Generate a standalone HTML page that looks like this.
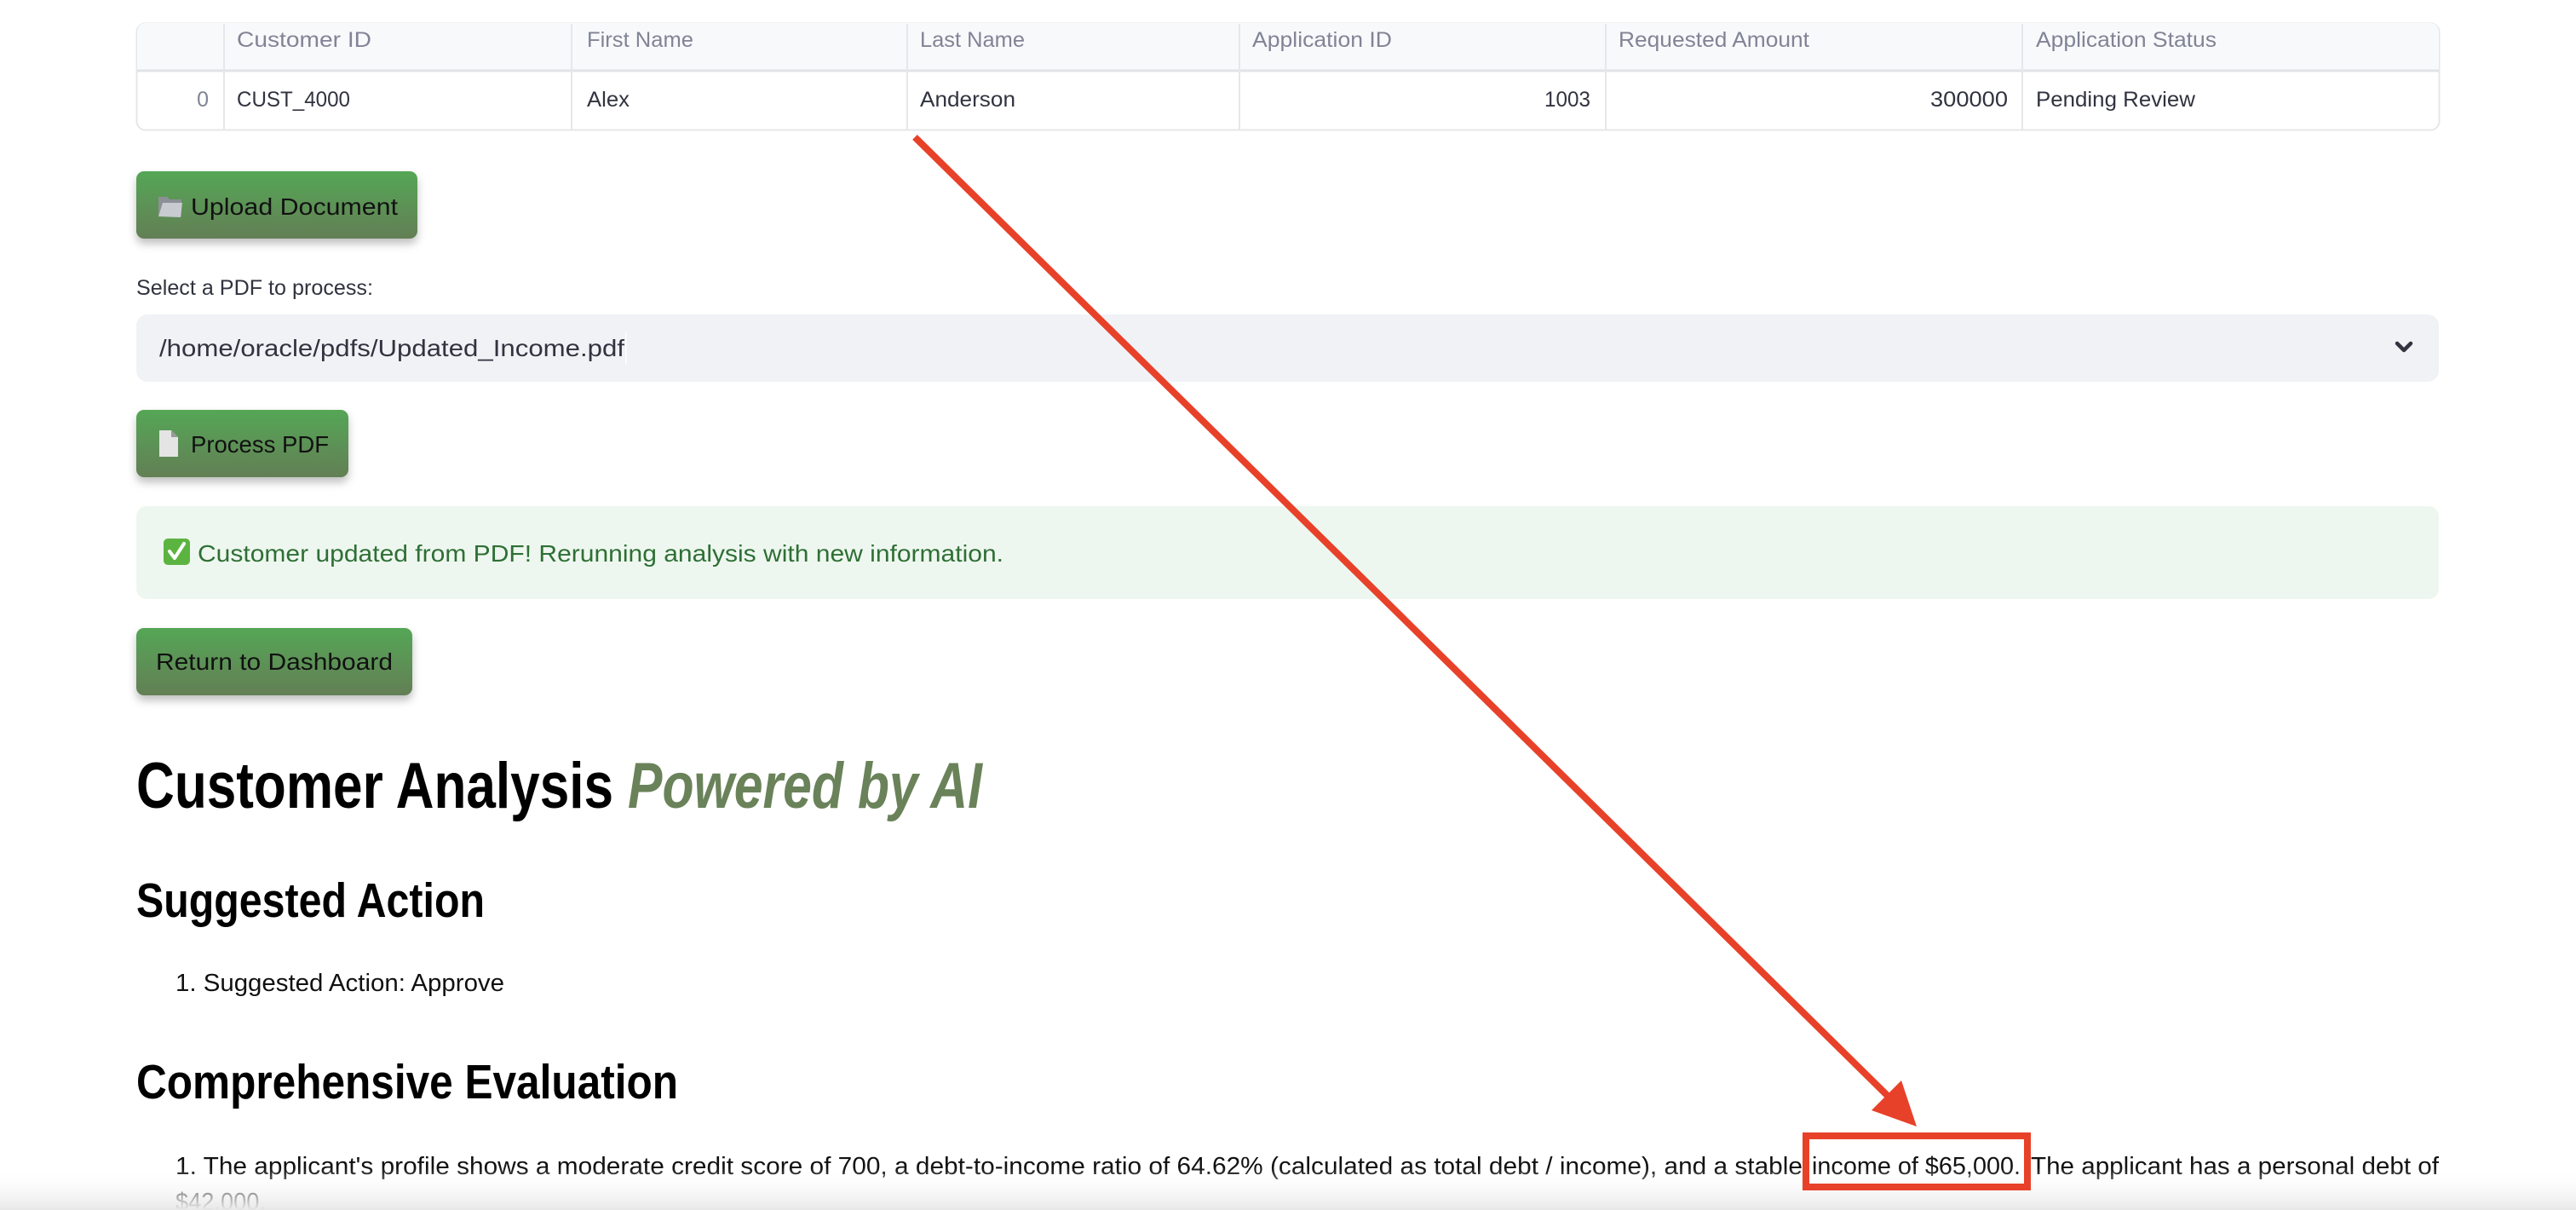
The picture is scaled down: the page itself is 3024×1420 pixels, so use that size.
<!DOCTYPE html>
<html><head><meta charset="utf-8"><style>
html,body{margin:0;padding:0;background:#fff;width:3024px;height:1420px;overflow:hidden}
svg{display:block}
text{font-family:"Liberation Sans",sans-serif}
</style></head><body>
<svg width="3024" height="1420" viewBox="0 0 3024 1420" xmlns="http://www.w3.org/2000/svg">
<defs>
<linearGradient id="btn" x1="0" y1="0" x2="0" y2="1"><stop offset="0" stop-color="#55a656"/><stop offset="1" stop-color="#637f55"/></linearGradient>
<linearGradient id="fade" x1="0" y1="0" x2="0" y2="1"><stop offset="0" stop-color="#fff" stop-opacity="0"/><stop offset="1" stop-color="#e8e8e8"/></linearGradient>
<filter id="sh" x="-10%" y="-20%" width="120%" height="160%"><feDropShadow dx="0" dy="6" stdDeviation="5" flood-color="#000" flood-opacity="0.25"/></filter>
</defs>
<rect width="3024" height="1420" fill="#fff"/>
<rect x="160.5" y="27.5" width="2703" height="125" rx="10" fill="#fff" stroke="#e6e7ea" stroke-width="2"/>
<path d="M161 83 V37 a10 10 0 0 1 10 -10 H2853 a10 10 0 0 1 10 10 V83 Z" fill="#f8f9fb"/>
<line x1="161" y1="83" x2="2863" y2="83" stroke="#e2e3e6" stroke-width="3"/>
<g stroke="#e6e7ea" stroke-width="2">
<line x1="263" y1="28" x2="263" y2="152"/><line x1="671" y1="28" x2="671" y2="152"/><line x1="1065" y1="28" x2="1065" y2="152"/><line x1="1455" y1="28" x2="1455" y2="152"/><line x1="1885" y1="28" x2="1885" y2="152"/><line x1="2374" y1="28" x2="2374" y2="152"/>
</g>
<g font-size="25" fill="#808495">
<text x="278" y="55" textLength="158" lengthAdjust="spacingAndGlyphs">Customer ID</text>
<text x="689" y="55" textLength="125" lengthAdjust="spacingAndGlyphs">First Name</text>
<text x="1080" y="55" textLength="123" lengthAdjust="spacingAndGlyphs">Last Name</text>
<text x="1470" y="55" textLength="164" lengthAdjust="spacingAndGlyphs">Application ID</text>
<text x="1900" y="55" textLength="224" lengthAdjust="spacingAndGlyphs">Requested Amount</text>
<text x="2390" y="55" textLength="212" lengthAdjust="spacingAndGlyphs">Application Status</text>
</g>
<text x="245" y="125" font-size="25" fill="#808495" text-anchor="end">0</text>
<g font-size="25" fill="#31333f">
<text x="278" y="125" textLength="133" lengthAdjust="spacingAndGlyphs">CUST_4000</text>
<text x="689" y="125" textLength="50" lengthAdjust="spacingAndGlyphs">Alex</text>
<text x="1080" y="125" textLength="112" lengthAdjust="spacingAndGlyphs">Anderson</text>
<text x="1813" y="125" textLength="54" lengthAdjust="spacingAndGlyphs">1003</text>
<text x="2266" y="125" textLength="91" lengthAdjust="spacingAndGlyphs">300000</text>
<text x="2390" y="125" textLength="187" lengthAdjust="spacingAndGlyphs">Pending Review</text>
</g>
<rect x="160" y="201" width="330" height="79" rx="9" fill="url(#btn)" filter="url(#sh)"/>
<path d="M186 231 h10 l3 3 h14 v20 l-3 -2 h-24 z" fill="#8c9096"/><path d="M186 254 l5 -16 h23 l-2 17 z" fill="#c8cbd0"/>
<text x="224" y="252" font-size="28" fill="#111" textLength="243" lengthAdjust="spacingAndGlyphs">Upload Document</text>
<text x="160" y="346" font-size="25" fill="#31333f" textLength="278" lengthAdjust="spacingAndGlyphs">Select a PDF to process:</text>
<rect x="160" y="369" width="2703" height="79" rx="13" fill="#f0f2f6"/>
<text x="187" y="418" font-size="28" fill="#31333f" textLength="546" lengthAdjust="spacingAndGlyphs">/home/oracle/pdfs/Updated_Income.pdf</text>
<rect x="734" y="390" width="1.5" height="38" fill="#fff"/>
<path d="M2814 403 l8 8 l8 -8" fill="none" stroke="#31333f" stroke-width="4.5" stroke-linecap="round" stroke-linejoin="round"/>
<rect x="160" y="481" width="249" height="79" rx="9" fill="url(#btn)" filter="url(#sh)"/>
<path d="M187 505 h14 l8 8 v23 h-22 z" fill="#e4e4e4"/><path d="M201 505 v8 h8 z" fill="#999"/>
<text x="224" y="531" font-size="28" fill="#111" textLength="162" lengthAdjust="spacingAndGlyphs">Process PDF</text>
<rect x="160" y="594" width="2703" height="109" rx="12" fill="#eef7ef"/>
<rect x="192" y="632" width="31" height="31" rx="5" fill="#5cb440"/>
<path d="M199 647 l6 8 l11 -17" fill="none" stroke="#fff" stroke-width="4" stroke-linecap="round" stroke-linejoin="round"/>
<text x="232" y="659" font-size="28" fill="#2e6f35" textLength="946" lengthAdjust="spacingAndGlyphs">Customer updated from PDF! Rerunning analysis with new information.</text>
<rect x="160" y="737" width="324" height="79" rx="9" fill="url(#btn)" filter="url(#sh)"/>
<text x="183" y="786" font-size="28" fill="#111" textLength="278" lengthAdjust="spacingAndGlyphs">Return to Dashboard</text>
<text x="160" y="948" font-size="76" font-weight="bold" fill="#000" textLength="560" lengthAdjust="spacingAndGlyphs">Customer Analysis</text>
<text x="737" y="948" font-size="76" font-weight="bold" font-style="italic" fill="#6a8259" textLength="416" lengthAdjust="spacingAndGlyphs">Powered by AI</text>
<text x="160" y="1076" font-size="57" font-weight="bold" fill="#000" textLength="409" lengthAdjust="spacingAndGlyphs">Suggested Action</text>
<text x="206" y="1163" font-size="29" fill="#111" textLength="386" lengthAdjust="spacingAndGlyphs">1. Suggested Action: Approve</text>
<text x="160" y="1289" font-size="57" font-weight="bold" fill="#000" textLength="636" lengthAdjust="spacingAndGlyphs">Comprehensive Evaluation</text>
<text x="206" y="1378" font-size="29" fill="#111" textLength="1910" lengthAdjust="spacingAndGlyphs">1. The applicant's profile shows a moderate credit score of 700, a debt-to-income ratio of 64.62% (calculated as total debt / income), and a stable</text>
<text x="2127" y="1378" font-size="29" fill="#111" textLength="245" lengthAdjust="spacingAndGlyphs">income of $65,000.</text>
<text x="2384" y="1378" font-size="29" fill="#111" textLength="479" lengthAdjust="spacingAndGlyphs">The applicant has a personal debt of</text>
<text x="206" y="1420" font-size="29" fill="#111" textLength="106" lengthAdjust="spacingAndGlyphs">$42,000.</text>
<rect x="0" y="1370" width="3024" height="50" fill="url(#fade)"/>
<rect x="2120" y="1333" width="260" height="60" fill="none" stroke="#e8412a" stroke-width="8"/>
<line x1="1074" y1="161" x2="2220" y2="1290" stroke="#e8412a" stroke-width="8"/>
<polygon points="2250,1322 2197,1303 2232,1268" fill="#e8412a"/>
</svg>
</body></html>
